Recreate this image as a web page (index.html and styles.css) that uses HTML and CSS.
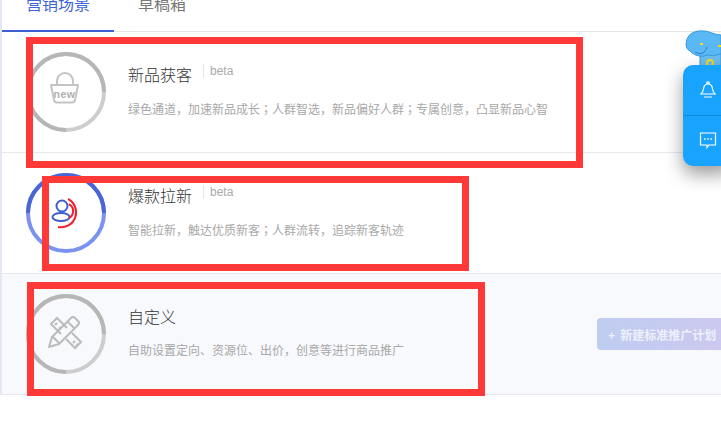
FILE: index.html
```html
<!DOCTYPE html>
<html lang="zh">
  <head>
    <meta charset="UTF-8" />
    <title>营销场景</title>
    <link rel="stylesheet" href="styles.css">
  </head>
  <body>
    <div class="page">
      <div class="tabs">
        <div class="tab active">营销场景</div>
        <div class="tab">草稿箱</div>
      </div>

      <div class="row">
        <svg class="ring" width="80" height="80" viewBox="0 0 80 80">
          <circle cx="40" cy="40" r="38" fill="none" stroke="#cdcdcd" stroke-width="4" />
          <path d="M40 78A38 38 0 1 1 78 40" fill="none" stroke="#b6b6b6" stroke-width="4" />
          <path d="M25 33h27l-3 15q-.5 2.500-3 2.500H31q-2.500 0-3-2.500z" fill="none" stroke="#c4c4c4" stroke-width="2" stroke-linejoin="round" />
          <path d="M31 32v-3a8 8 0 0 1 16 0v3" fill="none" stroke="#c4c4c4" stroke-width="2" />
          <text x="38.500" y="46" class="new-text">new</text>
        </svg>
        <div class="info">
          <div class="title-line"><span class="title">新品获客</span><span class="beta">beta</span></div>
          <div class="desc">绿色通道，加速新品成长<span class="semi" lang="zh-TW">；</span>人群智选，新品偏好人群<span class="semi" lang="zh-TW">；</span>专属创意，凸显新品心智</div>
        </div>
      </div>

      <div class="row">
        <svg class="ring" width="80" height="80" viewBox="0 0 80 80">
          <circle cx="40" cy="40" r="38" fill="none" stroke="#7b92f0" stroke-width="4" />
          <path d="M2 40a38 38 0 0 1 76 0" fill="none" stroke="#4a66d6" stroke-width="4" />
          <circle cx="36" cy="33" r="5.500" fill="none" stroke="#3f5fd0" stroke-width="2" />
          <ellipse cx="35" cy="44" rx="8.500" ry="4" fill="none" stroke="#3f5fd0" stroke-width="2" />
          <path d="M43 31A8 8 0 0 1 43 45" fill="none" stroke="#f0202e" stroke-width="2" />
          <path d="M42 26A15 15 0 0 1 32 54" fill="none" stroke="#f0202e" stroke-width="2" />
        </svg>
        <div class="info">
          <div class="title-line"><span class="title">爆款拉新</span><span class="beta">beta</span></div>
          <div class="desc">智能拉新，触达优质新客<span class="semi" lang="zh-TW">；</span>人群流转，追踪新客轨迹</div>
        </div>
      </div>

      <div class="row custom">
        <svg class="ring" width="80" height="80" viewBox="0 0 80 80">
          <circle cx="40" cy="40" r="38" fill="none" stroke="#cdcdcd" stroke-width="4" />
          <path d="M40 78A38 38 0 1 1 78 40" fill="none" stroke="#b6b6b6" stroke-width="4" />
          <path d="M35 40L25 30l6-6 10 10M40 45l9 9 6-6-9-9M29 31l2-2M33 35l2-2M47 49l2-2M50 52l2-2" fill="none" stroke="#bcbcbc" stroke-width="2" />
          <path d="M23 53l3-10 19-19q2-2 4 0l3 3q2 2 0 4L33 50zM42 28l6 6M27 43l6 6" fill="none" stroke="#bcbcbc" stroke-width="2" stroke-linejoin="round" />
        </svg>
        <div class="info">
          <div class="title-line"><span class="title">自定义</span></div>
          <div class="desc">自助设置定向、资源位、出价，创意等进行商品推广</div>
        </div>
        <button class="new-btn">+ 新建标准推广计划</button>
      </div>
    </div>

    <!-- annotation boxes -->
    <div class="mark mark-1"></div>
    <div class="mark mark-2"></div>
    <div class="mark mark-3"></div>

    <!-- floating helper -->
    <svg class="mascot" width="36" height="36" viewBox="0 0 36 36">
      <path d="M15 24h21v12H15z" fill="#6cbdf0" stroke="#3d97dc" />
      <path d="M1 15Q1 3 13 1q8-1 14 2 5 2 9 2v19q-8 3-14 1-3 2-8 1-5-1-8-4-5-3-5-7z" fill="#5ab9f5" stroke="#3d97dc" />
      <path d="M10 22q4 3 8 1 3-2 4-6" fill="none" stroke="#2a80c8" />
      <circle cx="25" cy="33" r="3" fill="none" stroke="#f4d820" stroke-width="2" />
      <path d="M15 14h3M33 16h3" stroke="#f4d820" stroke-width="2" />
    </svg>
    <div class="float-bar">
      <div class="float-item">
        <svg width="20" height="20" viewBox="0 0 20 20" fill="none" stroke="#fff" stroke-width="1.200">
          <path d="M3 14q2-2 2.500-5 .5-5 4.500-5t4.500 5q.5 3 2.500 5z" />
          <path d="M9 4V2h2v2M6 17h8" />
        </svg>
      </div>
      <div class="float-item">
        <svg width="20" height="20" viewBox="0 0 20 20" fill="none" stroke="#fff" stroke-width="1.200">
          <path d="M2.500 2h15v12h-6.500l-2 2.500V14H2.500z" />
          <path d="M6 8h1.500M9.300 8h1.500M12.500 8h1.500" stroke-width="1.500" />
        </svg>
      </div>
    </div>
  </body>
</html>
```

FILE: styles.css
```css
* {
  box-sizing: border-box;
}

html,
body {
  height: 100%;
}

body {
  margin: 0;
  background: #fff;
  font-family: "Liberation Sans", "Noto Sans CJK SC", sans-serif;
  overflow: hidden;
}

.page {
  margin-left: 2px;
  height: 395px;
}

body::before {
  content: "";
  position: absolute;
  left: 0;
  top: 0;
  width: 2px;
  height: 395px;
  background: #e4e8f2;
}

/* tabs */
.tabs {
  display: flex;
  height: 32px;
  border-bottom: 1px solid #e6e6e6;
}

.tab {
  width: 112px;
  height: 32px;
  padding-left: 24px;
  font-size: 16px;
  line-height: 10px;
  color: #777;
}

.tab.active {
  color: #3d63d6;
  border-bottom: 2px solid #3d5fd0;
}

/* rows */
.row {
  display: flex;
  align-items: flex-start;
  height: 121px;
  padding: 20px 0 0 24px;
  border-bottom: 1px solid #e6e8ee;
}

.row.custom {
  background: #f8f9fd;
}

.ring {
  flex: none;
}

.new-text {
  font-size: 10.500px;
  font-weight: bold;
  letter-spacing: 0.5px;
  fill: #b0b0b0;
  text-anchor: middle;
}

.info {
  margin-left: 22px;
}

.title-line {
  display: flex;
  align-items: flex-start;
  height: 24px;
  margin-top: 12px;
}

.title {
  font-size: 16px;
  font-weight: 300;
  line-height: 24px;
  color: #333;
}

.beta {
  margin-left: 11px;
  padding-left: 6px;
  border-left: 1px solid #e4e4e4;
  font-size: 12px;
  line-height: 14px;
  color: #aaa;
}

.desc {
  margin-top: 13px;
  font-size: 12px;
  line-height: 16px;
  color: #a8a8a8;
  white-space: nowrap;
}

.semi {
  font-family: "Noto Sans CJK TC", sans-serif;
}

.new-btn {
  position: absolute;
  left: 597px;
  top: 318px;
  width: 130px;
  height: 32px;
  padding: 0 0 0 11px;
  border: none;
  border-radius: 4px;
  background: linear-gradient(90deg, #bfcdf0, #cdc8f0);
  color: #eef0fb;
  font-family: inherit;
  font-size: 12px;
  font-weight: bold;
  word-spacing: 2px;
  text-align: left;
  white-space: nowrap;
}

/* annotations */
.mark {
  position: absolute;
  border: 7px solid #ff3838;
}

.mark-1 {
  left: 26px;
  top: 37px;
  width: 557px;
  height: 131px;
}

.mark-2 {
  left: 42px;
  top: 176px;
  width: 427px;
  height: 95px;
}

.mark-3 {
  left: 27px;
  top: 282px;
  width: 458px;
  height: 114px;
}

/* floating helper */
.mascot {
  position: absolute;
  left: 685px;
  top: 30px;
}

.float-bar {
  position: absolute;
  left: 683px;
  top: 65px;
  width: 50px;
  height: 101px;
  border-radius: 10px;
  background: #18a3ff;
  box-shadow: 0 8px 18px rgba(0, 0, 0, 0.4);
}

.float-item {
  height: 50px;
  padding: 15px 0 0 15px;
}

.float-item + .float-item {
  height: 51px;
  border-top: 1px solid #118bdc;
}
```
